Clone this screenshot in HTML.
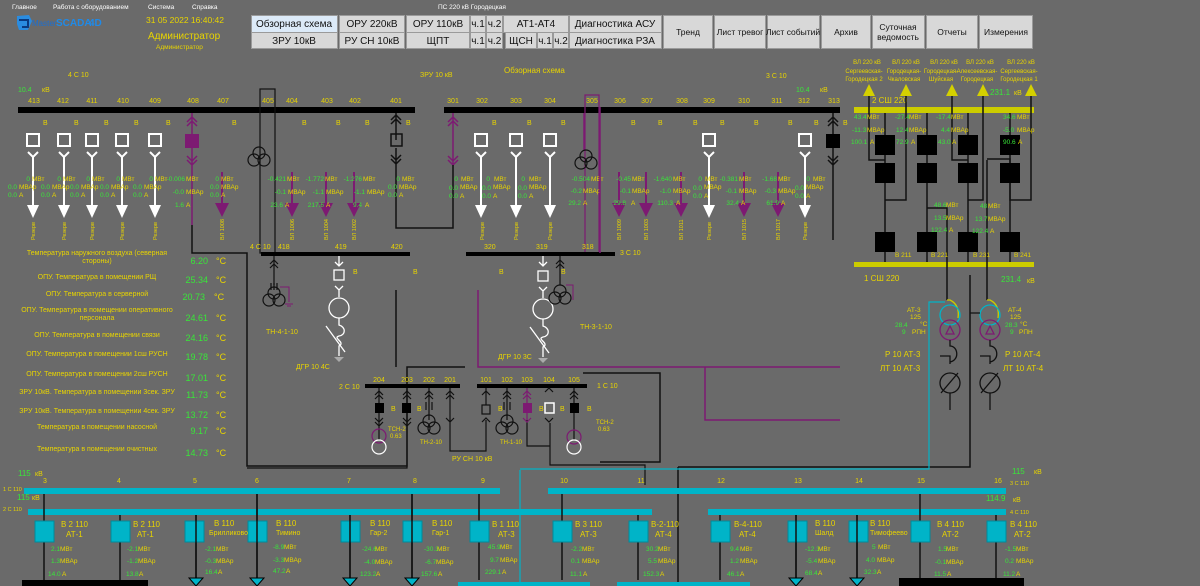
<!DOCTYPE html>
<html><head><meta charset="utf-8"><style>
html,body{margin:0;padding:0;background:#6a6a6a;width:1200px;height:586px;overflow:hidden}
svg{display:block;font-size:7px}
text{font-family:"Liberation Sans","DejaVu Sans",sans-serif}
.y{fill:#e8d400}.g{fill:#39e639}.w{fill:#fff}
.btn{fill:#d8d8d8;stroke:#9a9a9a;stroke-width:1}
.bt{font-size:10px;fill:#111;text-anchor:middle}
.bs{font-size:8.5px;fill:#111;text-anchor:middle}
</style></head><body>
<svg width="1200" height="586" viewBox="0 0 1200 586" xmlns="http://www.w3.org/2000/svg" font-size="7">
<defs>
<g id="wf" stroke="#fff" fill="none" stroke-width="2">
<rect x="-6" y="134" width="12" height="12"/>
<path d="M-5 152 L0 157 L5 152 M0 157 V205"/>
<path d="M-6 205 H6 L0 218 Z" fill="#fff" stroke="none"/>
</g>
<g id="pf" stroke="#7d1a72" fill="none" stroke-width="2">
<path d="M0 172 V205"/>
<path d="M-7 203 H7 L0 217 Z" fill="#7d1a72" stroke="none"/>
</g>
<g id="cb">
<rect x="-9" y="0" width="19" height="21" fill="#00b4c8" stroke="#008a9a"/>
</g>
<g id="ct" fill="#00b4c8" stroke="#000">
<path d="M-7 0 H7 L0 8 Z"/>
</g>
<g id="trf" fill="none" stroke="#111" stroke-width="1.2">
<circle cx="-5" cy="0" r="6"/><circle cx="5" cy="0" r="6"/><circle cx="0" cy="-7" r="6"/>
</g>
</defs>

<!-- top menu -->
<text x="12" y="9" class="w" font-size="6.5">Главное</text>
<text x="53" y="9" class="w" font-size="6.5">Работа с оборудованием</text>
<text x="148" y="9" class="w" font-size="6.5">Система</text>
<text x="192" y="9" class="w" font-size="6.5">Справка</text>
<text x="438" y="9" class="w" font-size="6.5">ПС 220 кВ Городецкая</text>
<!-- logo -->
<path d="M17 16 L29 15 L32 21 L28 30 L19 30 L17 24 Z" fill="#2a8ce0"/>
<path d="M19 20 H28 V27 H22" fill="none" stroke="#0a3a80" stroke-width="2"/>
<text x="32" y="26" fill="#1c6fd0" font-size="8">Master</text>
<text x="56" y="26" fill="#1f8ae8" font-size="10" font-weight="bold">SCADA</text>
<text x="89" y="26" fill="#1f8ae8" font-size="10" font-weight="bold">4D</text>
<text x="146" y="23" class="y" font-size="8.5">31 05 2022 16:40:42</text>
<text x="148" y="39" class="y" font-size="10">Администратор</text>
<text x="156" y="49" class="y" font-size="6.5">Администратор</text>

<!-- buttons -->
<rect x="251.5" y="15.5" width="86" height="17" fill="#dceaf8" stroke="#9a9a9a"/><text x="294" y="27" class="bt">Обзорная схема</text>
<rect x="339.5" y="15.5" width="65" height="17" class="btn"/><text x="372" y="27" class="bt">ОРУ 220кВ</text>
<rect x="406.5" y="15.5" width="63" height="17" class="btn"/><text x="438" y="27" class="bt">ОРУ 110кВ</text>
<rect x="470.5" y="15.5" width="15" height="17" class="btn"/><text x="478" y="27" class="bt">ч.1</text>
<rect x="486.5" y="15.5" width="16" height="17" class="btn"/><text x="494.5" y="27" class="bt">ч.2</text>
<rect x="503.5" y="15.5" width="65" height="17" class="btn"/><text x="536" y="27" class="bt">АТ1-АТ4</text>
<rect x="569.5" y="15.5" width="92" height="17" class="btn"/><text x="615" y="27" class="bt">Диагностика АСУ</text>
<rect x="251.5" y="32.5" width="86" height="16" class="btn"/><text x="294" y="44" class="bt">ЗРУ 10кВ</text>
<rect x="339.5" y="32.5" width="65" height="16" class="btn"/><text x="372" y="44" class="bt">РУ СН 10кВ</text>
<rect x="406.5" y="32.5" width="63" height="16" class="btn"/><text x="438" y="44" class="bt">ЩПТ</text>
<rect x="470.5" y="32.5" width="15" height="16" class="btn"/><text x="478" y="44" class="bt">ч.1</text>
<rect x="486.5" y="32.5" width="16" height="16" class="btn"/><text x="494.5" y="44" class="bt">ч.2</text>
<rect x="505.5" y="32.5" width="31" height="16" class="btn"/><text x="521" y="44" class="bt">ЩСН</text>
<rect x="537.5" y="32.5" width="15" height="16" class="btn"/><text x="545" y="44" class="bt">ч.1</text>
<rect x="553.5" y="32.5" width="15" height="16" class="btn"/><text x="561" y="44" class="bt">ч.2</text>
<rect x="569.5" y="32.5" width="92" height="16" class="btn"/><text x="615" y="44" class="bt">Диагностика РЗА</text>
<rect x="663.5" y="15.5" width="49" height="33" class="btn"/><text x="688" y="35" class="bs">Тренд</text>
<rect x="714.5" y="15.5" width="51" height="33" class="btn"/><text x="740" y="35" class="bs">Лист тревог</text>
<rect x="767.5" y="15.5" width="52" height="33" class="btn"/><text x="793" y="35" class="bs">Лист событий</text>
<rect x="821.5" y="15.5" width="49" height="33" class="btn"/><text x="846" y="35" class="bs">Архив</text>
<rect x="872.5" y="15.5" width="52" height="33" class="btn"/><text x="898" y="30" class="bs">Суточная</text><text x="898" y="40" class="bs">ведомость</text>
<rect x="926.5" y="15.5" width="51" height="33" class="btn"/><text x="952" y="35" class="bs">Отчеты</text>
<rect x="979.5" y="15.5" width="53" height="33" class="btn"/><text x="1006" y="35" class="bs">Измерения</text>

<text x="504" y="73" class="y" font-size="8">Обзорная схема</text>
<text x="68" y="77" class="y">4 С 10</text>
<text x="420" y="77" class="y">ЗРУ 10 кВ</text>
<text x="766" y="78" class="y">3 С 10</text>
<text x="18" y="92" class="g">10.4</text><text x="42" y="92" class="y">кВ</text>
<text x="796" y="92" class="g">10.4</text><text x="820" y="92" class="y">кВ</text>

<!-- top buses -->
<rect x="18" y="107" width="397" height="6" fill="#000"/>
<rect x="444" y="107" width="396" height="6" fill="#000"/>
<g class="y" text-anchor="middle">
<text x="34" y="103">413</text><text x="63" y="103">412</text><text x="92" y="103">411</text><text x="123" y="103">410</text><text x="155" y="103">409</text><text x="193" y="103">408</text><text x="223" y="103">407</text><text x="268" y="103">405</text><text x="292" y="103">404</text><text x="327" y="103">403</text><text x="355" y="103">402</text><text x="396" y="103">401</text>
<text x="453" y="103">301</text><text x="482" y="103">302</text><text x="516" y="103">303</text><text x="550" y="103">304</text><text x="592" y="103">305</text><text x="620" y="103">306</text><text x="647" y="103">307</text><text x="682" y="103">308</text><text x="709" y="103">309</text><text x="744" y="103">310</text><text x="777" y="103">311</text><text x="804" y="103">312</text><text x="834" y="103">313</text>
</g>
<g class="y">
<text x="43" y="125">В</text><text x="74" y="125">В</text><text x="104" y="125">В</text><text x="134" y="125">В</text><text x="166" y="125">В</text><text x="232" y="125">В</text><text x="302" y="125">В</text><text x="336" y="125">В</text><text x="365" y="125">В</text><text x="406" y="125">В</text>
<text x="492" y="125">В</text><text x="527" y="125">В</text><text x="561" y="125">В</text><text x="631" y="125">В</text><text x="658" y="125">В</text><text x="693" y="125">В</text><text x="720" y="125">В</text><text x="754" y="125">В</text><text x="788" y="125">В</text><text x="814" y="125">В</text><text x="843" y="125">В</text>
</g>

<use href="#wf" x="33"/><use href="#wf" x="64"/><use href="#wf" x="92"/><use href="#wf" x="122"/><use href="#wf" x="155"/>
<use href="#wf" x="481"/><use href="#wf" x="516"/><use href="#wf" x="550"/><use href="#wf" x="709"/><use href="#wf" x="805"/>
<use href="#pf" x="222"/><use href="#pf" x="292"/><use href="#pf" x="326"/><use href="#pf" x="354"/>
<use href="#pf" x="619"/><use href="#pf" x="646"/><use href="#pf" x="681"/><use href="#pf" x="744"/><use href="#pf" x="778"/>
<g stroke="#7d1a72" fill="none" stroke-width="1.5">
<path d="M192 113 V225 M187 122 L192 117 L197 122 M187 126 L192 121 L197 126 M187 156 L192 161 L197 156 M187 160 L192 165 L197 160"/>
</g>
<rect x="185" y="134" width="14" height="14" fill="#7d1a72"/>
<path d="M192 225 V253 H247 V466 H407 V367 H465" fill="none" stroke="#111" stroke-width="1.5"/>
<rect x="260" y="89" width="15" height="164" fill="none" stroke="#111" stroke-width="1.2"/>
<use href="#trf" x="259" y="160"/>
<g stroke="#111" fill="none" stroke-width="1.5">
<path d="M396 113 V140 M391 120 L396 115 L401 120 M391 124 L396 119 L401 124 M396 148 V228 H420 M391 155 L396 160 L401 155 M391 159 L396 164 L401 159"/>
<rect x="391" y="134" width="11" height="12"/>
</g>
<g stroke="#7d1a72" fill="none" stroke-width="1.5">
<path d="M453 113 V165 M448 122 L453 117 L458 122 M448 126 L453 121 L458 126 M448 156 L453 161 L458 156 M448 160 L453 165 L458 160"/>
</g>
<path d="M453 165 V228 H420" fill="none" stroke="#111" stroke-width="1.5"/>
<rect x="585" y="95" width="14" height="158" fill="none" stroke="#7d1a72" stroke-width="1.2"/>
<path d="M584 113 V150" stroke="#7d1a72" stroke-width="1.5"/>
<use href="#trf" x="586" y="163"/>
<g stroke="#111" fill="none" stroke-width="1.5">
<path d="M833 113 V240 M828 122 L833 117 L838 122 M828 126 L833 121 L838 126 M828 156 L833 161 L838 156 M828 160 L833 165 L838 160"/>
</g>
<rect x="826" y="134" width="14" height="14" fill="#000"/>

<g font-size="6.5">
<text x="30" y="181" class="g" text-anchor="end">0</text><text x="32" y="181" class="y">МВт</text><text x="8" y="189" class="g">0.0</text><text x="19" y="189" class="y">МВАр</text><text x="8" y="197" class="g">0.0</text><text x="19" y="197" class="y">А</text>
<text x="61" y="181" class="g" text-anchor="end">0</text><text x="63" y="181" class="y">МВт</text><text x="41" y="189" class="g">0.0</text><text x="52" y="189" class="y">МВАр</text><text x="41" y="197" class="g">0.0</text><text x="52" y="197" class="y">А</text>
<text x="90" y="181" class="g" text-anchor="end">0</text><text x="92" y="181" class="y">МВт</text><text x="70" y="189" class="g">0.0</text><text x="81" y="189" class="y">МВАр</text><text x="70" y="197" class="g">0.0</text><text x="81" y="197" class="y">А</text>
<text x="120" y="181" class="g" text-anchor="end">0</text><text x="122" y="181" class="y">МВт</text><text x="100" y="189" class="g">0.0</text><text x="111" y="189" class="y">МВАр</text><text x="100" y="197" class="g">0.0</text><text x="111" y="197" class="y">А</text>
<text x="153" y="181" class="g" text-anchor="end">0</text><text x="155" y="181" class="y">МВт</text><text x="133" y="189" class="g">0.0</text><text x="144" y="189" class="y">МВАр</text><text x="133" y="197" class="g">0.0</text><text x="144" y="197" class="y">А</text>
<text x="185" y="181" class="g" text-anchor="end">-0.006</text><text x="186" y="181" class="y">МВт</text><text x="184" y="194" class="g" text-anchor="end">-0.0</text><text x="186" y="194" class="y">МВАр</text><text x="184" y="207" class="g" text-anchor="end">1.6</text><text x="186" y="207" class="y">А</text>
<text x="219" y="181" class="g" text-anchor="end">0</text><text x="221" y="181" class="y">МВт</text><text x="210" y="189" class="g">0.0</text><text x="221" y="189" class="y">МВАр</text><text x="210" y="197" class="g">0.0</text><text x="221" y="197" class="y">А</text>
<text x="286" y="181" class="g" text-anchor="end">-0.421</text><text x="287" y="181" class="y">МВт</text><text x="286" y="194" class="g" text-anchor="end">-0.1</text><text x="288" y="194" class="y">МВАр</text><text x="283" y="207" class="g" text-anchor="end">23.6</text><text x="285" y="207" class="y">А</text>
<text x="324" y="181" class="g" text-anchor="end">-1.772</text><text x="325" y="181" class="y">МВт</text><text x="324" y="194" class="g" text-anchor="end">-1.1</text><text x="326" y="194" class="y">МВАр</text><text x="324" y="207" class="g" text-anchor="end">217.6</text><text x="326" y="207" class="y">А</text>
<text x="362" y="181" class="g" text-anchor="end">-1.276</text><text x="363" y="181" class="y">МВт</text><text x="365" y="194" class="g" text-anchor="end">-1.1</text><text x="367" y="194" class="y">МВАр</text><text x="362" y="207" class="g" text-anchor="end">9.4</text><text x="365" y="207" class="y">А</text>
<text x="400" y="181" class="g" text-anchor="end">0</text><text x="402" y="181" class="y">МВт</text><text x="388" y="189" class="g">0.0</text><text x="399" y="189" class="y">МВАр</text><text x="388" y="197" class="g">0.0</text><text x="399" y="197" class="y">А</text>
<text x="458" y="181" class="g" text-anchor="end">0</text><text x="461" y="181" class="y">МВт</text><text x="449" y="190" class="g">0.0</text><text x="460" y="189" class="y">МВАр</text><text x="449" y="198" class="g">0.0</text><text x="460" y="198" class="y">А</text>
<text x="490" y="181" class="g" text-anchor="end">0</text><text x="494" y="181" class="y">МВт</text><text x="482" y="190" class="g">0.0</text><text x="493" y="189" class="y">МВАр</text><text x="482" y="198" class="g">0.0</text><text x="493" y="198" class="y">А</text>
<text x="525" y="181" class="g" text-anchor="end">0</text><text x="529" y="181" class="y">МВт</text><text x="518" y="190" class="g">0.0</text><text x="529" y="189" class="y">МВАр</text><text x="518" y="198" class="g">0.0</text><text x="529" y="198" class="y">А</text>
<text x="590" y="181" class="g" text-anchor="end">-0.504</text><text x="591" y="181" class="y">МВт</text><text x="582" y="193" class="g" text-anchor="end">-0.2</text><text x="583" y="193" class="y">МВАр</text><text x="581" y="205" class="g" text-anchor="end">29.2</text><text x="583" y="205" class="y">А</text>
<text x="631" y="181" class="g" text-anchor="end">-0.45</text><text x="632" y="181" class="y">МВт</text><text x="631" y="193" class="g" text-anchor="end">-0.1</text><text x="632" y="193" class="y">МВАр</text><text x="626" y="205" class="g" text-anchor="end">29.8</text><text x="631" y="205" class="y">А</text>
<text x="672" y="181" class="g" text-anchor="end">-1.640</text><text x="673" y="181" class="y">МВт</text><text x="671" y="193" class="g" text-anchor="end">-1.0</text><text x="673" y="193" class="y">МВАр</text><text x="673" y="205" class="g" text-anchor="end">110.3</text><text x="676" y="205" class="y">А</text>
<text x="702" y="181" class="g" text-anchor="end">0</text><text x="705" y="181" class="y">МВт</text><text x="693" y="190" class="g">0.0</text><text x="704" y="189" class="y">МВАр</text><text x="693" y="198" class="g">0.0</text><text x="704" y="198" class="y">А</text>
<text x="738" y="181" class="g" text-anchor="end">-0.381</text><text x="739" y="181" class="y">МВт</text><text x="737" y="193" class="g" text-anchor="end">-0.1</text><text x="739" y="193" class="y">МВАр</text><text x="739" y="205" class="g" text-anchor="end">32.4</text><text x="741" y="205" class="y">А</text>
<text x="777" y="181" class="g" text-anchor="end">-1.68</text><text x="778" y="181" class="y">МВт</text><text x="776" y="193" class="g" text-anchor="end">-0.3</text><text x="778" y="193" class="y">МВАр</text><text x="779" y="205" class="g" text-anchor="end">61.9</text><text x="781" y="205" class="y">А</text>
<text x="810" y="181" class="g" text-anchor="end">0</text><text x="813" y="181" class="y">МВт</text><text x="795" y="190" class="g">0.0</text><text x="806" y="189" class="y">МВАр</text><text x="795" y="198" class="g">0.0</text><text x="806" y="198" class="y">А</text>
</g>
<g class="y" font-size="5.5">
<text transform="translate(35,240) rotate(-90)">Резерв</text><text transform="translate(66,240) rotate(-90)">Резерв</text><text transform="translate(94,240) rotate(-90)">Резерв</text><text transform="translate(124,240) rotate(-90)">Резерв</text><text transform="translate(157,240) rotate(-90)">Резерв</text>
<text transform="translate(224,240) rotate(-90)">ВЛ 1008</text><text transform="translate(294,240) rotate(-90)">ВЛ 1006</text><text transform="translate(328,240) rotate(-90)">ВЛ 1004</text><text transform="translate(356,240) rotate(-90)">ВЛ 1002</text>
<text transform="translate(484,240) rotate(-90)">Резерв</text><text transform="translate(518,240) rotate(-90)">Резерв</text><text transform="translate(552,240) rotate(-90)">Резерв</text>
<text transform="translate(621,240) rotate(-90)">ВЛ 1009</text><text transform="translate(648,240) rotate(-90)">ВЛ 1003</text><text transform="translate(683,240) rotate(-90)">ВЛ 1011</text><text transform="translate(711,240) rotate(-90)">Резерв</text><text transform="translate(746,240) rotate(-90)">ВЛ 1015</text><text transform="translate(780,240) rotate(-90)">ВЛ 1017</text><text transform="translate(807,240) rotate(-90)">Резерв</text>
</g>

<g class="y" font-size="7" text-anchor="middle">
<text x="97" y="255">Температура наружного воздуха (северная</text><text x="97" y="263">стороны)</text>
<text x="97" y="279">ОПУ. Температура в помещении РЩ</text>
<text x="97" y="296">ОПУ. Температура в серверной</text>
<text x="97" y="312">ОПУ. Температура в помещении оперативного</text><text x="97" y="320">персонала</text>
<text x="97" y="337">ОПУ. Температура в помещении связи</text>
<text x="97" y="356">ОПУ. Температура в помещении 1сш РУСН</text>
<text x="97" y="376">ОПУ. Температура в помещении 2сш РУСН</text>
<text x="97" y="394">ЗРУ 10кВ. Температура в помещении 3сек. ЗРУ</text>
<text x="97" y="413">ЗРУ 10кВ. Температура в помещении 4сек. ЗРУ</text>
<text x="97" y="429">Температура в помещении насосной</text>
<text x="97" y="451">Температура в помещении очистных</text>
</g>
<g font-size="9">
<text x="208" y="264" class="g" text-anchor="end">6.20</text><text x="216" y="264" class="y">°C</text>
<text x="208" y="283" class="g" text-anchor="end">25.34</text><text x="216" y="283" class="y">°C</text>
<text x="205" y="300" class="g" text-anchor="end">20.73</text><text x="214" y="300" class="y">°C</text>
<text x="208" y="321" class="g" text-anchor="end">24.61</text><text x="216" y="321" class="y">°C</text>
<text x="208" y="341" class="g" text-anchor="end">24.16</text><text x="216" y="341" class="y">°C</text>
<text x="208" y="360" class="g" text-anchor="end">19.78</text><text x="216" y="360" class="y">°C</text>
<text x="208" y="381" class="g" text-anchor="end">17.01</text><text x="216" y="381" class="y">°C</text>
<text x="208" y="398" class="g" text-anchor="end">11.73</text><text x="216" y="398" class="y">°C</text>
<text x="208" y="418" class="g" text-anchor="end">13.72</text><text x="216" y="418" class="y">°C</text>
<text x="208" y="434" class="g" text-anchor="end">9.17</text><text x="216" y="434" class="y">°C</text>
<text x="208" y="456" class="g" text-anchor="end">14.73</text><text x="216" y="456" class="y">°C</text>
</g>

<rect x="261" y="252" width="149" height="4" fill="#000"/>
<rect x="466" y="252" width="149" height="4" fill="#000"/>
<text x="250" y="249" class="y">4 С 10</text><text x="278" y="249" class="y">418</text><text x="335" y="249" class="y">419</text><text x="391" y="249" class="y">420</text>
<text x="484" y="249" class="y">320</text><text x="536" y="249" class="y">319</text><text x="582" y="249" class="y">318</text><text x="620" y="255" class="y">3 С 10</text>
<g class="y"><text x="353" y="274">В</text><text x="413" y="274">В</text><text x="499" y="274">В</text><text x="561" y="274">В</text></g>
<path d="M600 107 V253" stroke="#7d1a72" stroke-width="1.5"/>
<g stroke="#111" fill="none" stroke-width="1.2">
<path d="M274 256 V285 M270 264 L274 260 L278 264 M270 268 L274 264 L278 268"/>
<path d="M271 283 V290 M274 283 V290 M277 283 V290"/>
</g>
<use href="#trf" x="274" y="300"/>
<path d="M280 287 H289 V302 M285 304 H293 M287 306 H291" stroke="#7d1a72" fill="none"/>
<text x="266" y="334" class="y">ТН-4-1-10</text>
<g stroke="#fff" fill="none" stroke-width="1.3">
<path d="M335 262 L339 266 L343 262 M339 266 V256"/>
<rect x="334" y="270" width="10" height="10"/>
<path d="M335 286 L339 290 L343 286 M339 290 V297"/>
<circle cx="339" cy="308" r="10"/>
<path d="M339 318 V325 C346 327 346 335 339 336 C332 338 346 342 339 346 V356 M326 326 L345 352"/>
</g>
<path d="M334 357 H344 L339 362 Z" fill="#aaa"/>
<text x="296" y="369" class="y">ДГР 10 4С</text>
<g stroke="#fff" fill="none" stroke-width="1.3">
<path d="M539 262 L543 266 L547 262 M543 266 V256"/>
<rect x="538" y="271" width="10" height="10"/>
<path d="M539 287 L543 291 L547 287 M543 291 V298"/>
<circle cx="543" cy="309" r="10"/>
<path d="M543 319 V326 C550 328 550 336 543 337 C536 339 550 343 543 347 V357 M530 327 L549 353"/>
</g>
<path d="M538 358 H548 L543 363 Z" fill="#aaa"/>
<text x="498" y="359" class="y">ДГР 10 3С</text>
<g stroke="#111" fill="none" stroke-width="1.2"><path d="M560 256 V285 M556 264 L560 260 L564 264 M556 268 L560 264 L564 268"/></g>
<use href="#trf" x="560" y="298"/>
<path d="M566 285 H573 V300" stroke="#7d1a72" fill="none"/>
<text x="580" y="329" class="y">ТН-3-1-10</text>
<path d="M396 290 V367" stroke="#111" fill="none" stroke-width="1.5"/>
<path d="M478 290 V367 H840" stroke="#7d1a72" fill="none" stroke-width="1.5"/>

<rect x="365" y="384" width="95" height="4" fill="#000"/>
<rect x="477" y="384" width="110" height="4" fill="#000"/>
<text x="339" y="389" class="y">2 С 10</text><text x="597" y="388" class="y">1 С 10</text>
<g class="y" text-anchor="middle"><text x="379" y="382">204</text><text x="407" y="382">203</text><text x="429" y="382">202</text><text x="450" y="382">201</text><text x="486" y="382">101</text><text x="507" y="382">102</text><text x="527" y="382">103</text><text x="549" y="382">104</text><text x="574" y="382">105</text></g>
<g stroke="#111" fill="none" stroke-width="1.2">
<path d="M379 388 V440 M375 395 L379 391 L383 395 M375 399 L379 395 L383 399 M375 418 L379 422 L383 418 M375 422 L379 426 L383 422"/>
<path d="M407 388 V468 H247 M403 395 L407 391 L411 395 M403 399 L407 395 L411 399 M403 418 L407 422 L411 418 M403 422 L407 426 L411 422"/>
<path d="M429 388 V420 M425 395 L429 391 L433 395 M425 399 L429 395 L433 399 M426 402 V410 M429 402 V410 M432 402 V410"/>
<path d="M450 388 V451 H486 V420 M446 395 L450 391 L454 395 M446 399 L450 395 L454 399 M446 418 L450 422 L454 418"/>
<path d="M486 388 V405 M482 395 L486 391 L490 395 M482 422 L486 418 L490 422"/>
<rect x="482" y="405" width="8" height="9"/>
<path d="M507 388 V420 M503 395 L507 391 L511 395 M503 399 L507 395 L511 399 M504 402 V410 M507 402 V410 M510 402 V410"/>
<path d="M527 420 V446 H550 V423 M550 446 V465 H645 V485 M574 388 V440 M570 395 L574 391 L578 395 M570 399 L574 395 L578 399"/>
<path d="M545 392 L549 388 L553 392 M545 418 L549 422 L553 418"/>
</g>
<rect x="375" y="403" width="9" height="10" fill="#000"/>
<rect x="402" y="403" width="9" height="10" fill="#000"/>
<rect x="570" y="403" width="9" height="10" fill="#000"/>
<rect x="545" y="403" width="9" height="10" fill="none" stroke="#fff" stroke-width="1.5"/>
<rect x="523" y="403" width="9" height="10" fill="#7d1a72"/>
<g stroke="#7d1a72" fill="none" stroke-width="1.2"><path d="M527 388 V420 M523 395 L527 391 L531 395 M523 399 L527 395 L531 399 M523 418 L527 422 L531 418"/></g>
<use href="#trf" x="429" y="428"/><use href="#trf" x="507" y="428"/>
<circle cx="379" cy="436" r="7" fill="none" stroke="#7d1a72" stroke-width="1.2"/>
<circle cx="379" cy="447" r="7" fill="none" stroke="#fff" stroke-width="1.2"/>
<circle cx="574" cy="437" r="7" fill="none" stroke="#7d1a72" stroke-width="1.2"/>
<circle cx="574" cy="447" r="7" fill="none" stroke="#fff" stroke-width="1.2"/>
<g class="y" font-size="6"><text x="388" y="431">ТСН-2</text><text x="390" y="438">0.63</text><text x="596" y="424">ТСН-2</text><text x="598" y="431">0.63</text><text x="420" y="444">ТН-2-10</text><text x="500" y="444">ТН-1-10</text></g>
<g class="y"><text x="391" y="411">В</text><text x="417" y="411">В</text><text x="498" y="411">В</text><text x="539" y="411">В</text><text x="560" y="411">В</text><text x="587" y="411">В</text></g>
<text x="452" y="461" class="y">РУ СН 10 кВ</text>
<path d="M583 373 H660 V462 H645" fill="none" stroke="#111" stroke-width="1.5"/>
<path d="M645 462 H600 M678 467 V586 M678 467 H970 V275" fill="none" stroke="#111" stroke-width="1.5"/>
<path d="M520 470 V586 M520 469 H929 V302 H945" fill="none" stroke="#00b4c8" stroke-width="1.2"/>
<path d="M705 367 V420 H840" fill="none" stroke="#7d1a72" stroke-width="1.5"/>

<g class="y" font-size="6" text-anchor="middle">
<text x="867" y="64">ВЛ 220 кВ</text><text x="906" y="64">ВЛ 220 кВ</text><text x="944" y="64">ВЛ 220 кВ</text><text x="980" y="64">ВЛ 220 кВ</text><text x="1021" y="64">ВЛ 220 кВ</text>
<text x="864" y="73">Сергеевская-</text><text x="864" y="81">Городецкая 2</text>
<text x="904" y="73">Городецкая-</text><text x="904" y="81">Чкаловская</text>
<text x="941" y="73">Городецкая-</text><text x="941" y="81">Шуйская</text>
<text x="977" y="73">Алексеевская-</text><text x="977" y="81">Городецкая</text>
<text x="1019" y="73">Сергеевская-</text><text x="1019" y="81">Городецкая 1</text>
</g>
<g fill="#d4d000"><path d="M863 96 H875 L869 84 Z"/><path d="M900 96 H912 L906 84 Z"/><path d="M946 96 H958 L952 84 Z"/><path d="M977 96 H989 L983 84 Z"/><path d="M1025 96 H1037 L1031 84 Z"/></g>
<text x="990" y="95" class="g" font-size="8">231.1</text><text x="1014" y="95" class="y">кВ</text>
<text x="872" y="103" class="y" font-size="8">2 СШ 220</text>
<rect x="854" y="107" width="180" height="6" fill="#cccc00"/>
<rect x="854" y="262" width="180" height="5" fill="#cccc00"/>
<g stroke="#111" fill="none" stroke-width="1.5">
<path d="M869 96 V160 H885 M906 96 V200 H885 M952 96 V160 H968 M983 96 V200 H968 M1031 96 V200 H1010 V159 H987"/>
<path d="M885 113 V262 M927 113 V262 M968 113 V262 M1010 113 V262 M927 208 H947 V300 M987 160 V300"/>
</g>
<g fill="#000"><rect x="875" y="135" width="20" height="20"/><rect x="917" y="135" width="20" height="20"/><rect x="958" y="135" width="20" height="20"/><rect x="1000" y="135" width="20" height="20"/>
<rect x="875" y="163" width="20" height="20"/><rect x="917" y="163" width="20" height="20"/><rect x="958" y="163" width="20" height="20"/><rect x="1000" y="163" width="20" height="20"/>
<rect x="875" y="232" width="20" height="20"/><rect x="917" y="232" width="20" height="20"/><rect x="958" y="232" width="20" height="20"/><rect x="1000" y="232" width="20" height="20"/></g>
<g font-size="6.5">
<text x="854" y="119" class="g">43.4</text><text x="867" y="119" class="y">МВт</text><text x="895" y="119" class="g">-27.4</text><text x="909" y="119" class="y">МВт</text><text x="936" y="119" class="g">-17.4</text><text x="951" y="119" class="y">МВт</text><text x="1003" y="119" class="g">34.6</text><text x="1017" y="119" class="y">МВт</text>
<text x="852" y="132" class="g">-11.3</text><text x="867" y="132" class="y">МВАр</text><text x="896" y="132" class="g">12.4</text><text x="909" y="132" class="y">МВАр</text><text x="941" y="132" class="g">4.4</text><text x="951" y="132" class="y">МВАр</text><text x="1003" y="132" class="g">-5.0</text><text x="1017" y="132" class="y">МВАр</text>
<text x="851" y="144" class="g">100.1</text><text x="870" y="144" class="y">А</text><text x="896" y="144" class="g">72.9</text><text x="911" y="144" class="y">А</text><text x="938" y="144" class="g">43.0</text><text x="952" y="144" class="y">А</text><text x="1003" y="144" class="g">90.6</text><text x="1018" y="144" class="y">А</text>
<text x="934" y="207" class="g">48.6</text><text x="946" y="207" class="y">МВт</text><text x="980" y="208" class="g">48</text><text x="988" y="208" class="y">МВт</text>
<text x="934" y="220" class="g">13.5</text><text x="946" y="220" class="y">МВАр</text><text x="975" y="221" class="g">13.7</text><text x="988" y="221" class="y">МВАр</text>
<text x="931" y="232" class="g">122.4</text><text x="949" y="232" class="y">А</text><text x="972" y="233" class="g">122.4</text><text x="990" y="233" class="y">А</text>
<text x="895" y="257" class="y">В 211</text><text x="931" y="257" class="y">В 221</text><text x="973" y="257" class="y">В 231</text><text x="1014" y="257" class="y">В 241</text>
</g>
<text x="864" y="281" class="y" font-size="8">1 СШ 220</text>
<text x="1001" y="282" class="g" font-size="8">231.4</text><text x="1027" y="283" class="y">кВ</text>
<g fill="none" stroke-width="1.3">
<path d="M947 300 H950 Q960 305 958 318" stroke="#cccc00"/><path d="M987 300 H990 Q1000 305 998 318" stroke="#cccc00"/>
<circle cx="950" cy="315" r="10" stroke="#00b4c8"/><circle cx="990" cy="315" r="10" stroke="#00b4c8"/>
<circle cx="950" cy="330" r="10" stroke="#7d1a72"/><circle cx="990" cy="330" r="10" stroke="#7d1a72"/>
<path d="M946 334 H954 L950 326 Z M986 334 H994 L990 326 Z" stroke="#7d1a72"/>
<path d="M950 340 V346 C958 346 960 360 950 362 M940 356 H950 V364 M990 340 V346 C998 346 1000 360 990 362 M980 356 H990 V364" stroke="#111"/>
<circle cx="950" cy="383" r="10" stroke="#111"/><circle cx="990" cy="383" r="10" stroke="#111"/>
<path d="M941 393 L958 373 M981 393 L998 373 M950 393 V410 M990 393 V410 M980 313 H970" stroke="#111"/>
</g>
<g class="y" font-size="6.5">
<text x="907" y="312">АТ-3</text><text x="910" y="319">125</text><text x="895" y="327" class="g">28.4</text><text x="920" y="326">°C</text><text x="902" y="334" class="g">9</text><text x="912" y="334">РПН</text>
<text x="1008" y="312">АТ-4</text><text x="1010" y="319">125</text><text x="1005" y="327" class="g">28.3</text><text x="1020" y="326">°C</text><text x="1010" y="334" class="g">9</text><text x="1019" y="334">РПН</text>
</g>
<g class="y" font-size="8"><text x="885" y="357">Р 10 АТ-3</text><text x="880" y="371">ЛТ 10 АТ-3</text><text x="1005" y="357">Р 10 АТ-4</text><text x="1003" y="371">ЛТ 10 АТ-4</text></g>

<text x="18" y="476" class="g" font-size="8">115</text><text x="35" y="476" class="y">кВ</text>
<text x="17" y="500" class="g" font-size="8">115</text><text x="32" y="500" class="y">кВ</text>
<text x="3" y="491" class="y" font-size="5.5">1 С 110</text><text x="3" y="511" class="y" font-size="5.5">2 С 110</text>
<text x="1012" y="474" class="g" font-size="8">115</text><text x="1034" y="474" class="y">кВ</text>
<text x="1010" y="485" class="y" font-size="5.5">3 С 110</text>
<text x="986" y="501" class="g" font-size="8">114.9</text><text x="1013" y="502" class="y">кВ</text>
<text x="1010" y="514" class="y" font-size="5.5">4 С 110</text>
<g class="y" text-anchor="middle">
<text x="45" y="483">3</text><text x="119" y="483">4</text><text x="195" y="483">5</text><text x="257" y="483">6</text><text x="349" y="483">7</text><text x="415" y="483">8</text><text x="483" y="483">9</text><text x="564" y="483">10</text><text x="641" y="483">11</text><text x="721" y="483">12</text><text x="798" y="483">13</text><text x="859" y="483">14</text><text x="921" y="483">15</text><text x="998" y="483">16</text>
</g>
<rect x="24" y="488" width="476" height="6" fill="#00b4c8"/>
<rect x="548" y="488" width="458" height="6" fill="#00b4c8"/>
<rect x="28" y="509" width="624" height="6" fill="#00b4c8"/>
<rect x="708" y="509" width="298" height="6" fill="#00b4c8"/>
<g stroke="#111" stroke-width="1.5">
<path d="M44 494 V582 M120 515 V582 M196 515 V580 M257 494 V580 M350 515 V580 M412 494 V580 M479 494 V580 M562 494 V580 M638 515 V580 M720 515 V580 M796 515 V580 M857 515 V580 M920 494 V580 M996 515 V580"/>
</g>
<g>
<use href="#cb" x="44" y="521"/><use href="#cb" x="120" y="521"/><use href="#cb" x="194" y="521"/><use href="#cb" x="257" y="521"/><use href="#cb" x="350" y="521"/><use href="#cb" x="412" y="521"/><use href="#cb" x="479" y="521"/><use href="#cb" x="562" y="521"/><use href="#cb" x="638" y="521"/><use href="#cb" x="720" y="521"/><use href="#cb" x="797" y="521"/><use href="#cb" x="858" y="521"/><use href="#cb" x="920" y="521"/><use href="#cb" x="996" y="521"/>
</g>
<path d="M196 515 V580 M257 494 V580 M350 515 V580 M412 494 V580 M796 515 V580 M857 515 V580" stroke="#111" stroke-width="1.5"/>
<use href="#ct" x="196" y="578"/><use href="#ct" x="257" y="578"/><use href="#ct" x="350" y="578"/><use href="#ct" x="412" y="578"/><use href="#ct" x="796" y="578"/><use href="#ct" x="857" y="578"/>
<g class="y" font-size="8">
<text x="61" y="527">В 2 110</text><text x="66" y="537">АТ-1</text>
<text x="133" y="527">В 2 110</text><text x="137" y="537">АТ-1</text>
<text x="214" y="526">В 110</text><text x="209" y="535" font-size="7">Брилликово</text>
<text x="276" y="526">В 110</text><text x="276" y="535" font-size="7">Тимино</text>
<text x="370" y="526">В 110</text><text x="370" y="535" font-size="7">Гар-2</text>
<text x="432" y="526">В 110</text><text x="432" y="535" font-size="7">Гар-1</text>
<text x="492" y="527">В 1 110</text><text x="498" y="537">АТ-3</text>
<text x="575" y="527">В 3 110</text><text x="580" y="537">АТ-3</text>
<text x="651" y="527">В-2-110</text><text x="655" y="537">АТ-4</text>
<text x="734" y="527">В-4-110</text><text x="739" y="537">АТ-4</text>
<text x="815" y="526">В 110</text><text x="815" y="535" font-size="7">Шалд</text>
<text x="870" y="526">В 110</text><text x="870" y="535" font-size="7">Тимофеево</text>
<text x="937" y="527">В 4 110</text><text x="942" y="537">АТ-2</text>
<text x="1010" y="527">В 4 110</text><text x="1014" y="537">АТ-2</text>
</g>
<g font-size="6.5">
<text x="51" y="551" class="g">2.1</text><text x="60" y="551" class="y">МВт</text><text x="51" y="563" class="g">1.3</text><text x="60" y="563" class="y">МВАр</text><text x="48" y="576" class="g">14.0</text><text x="62" y="576" class="y">А</text>
<text x="127" y="551" class="g">-2.1</text><text x="138" y="551" class="y">МВт</text><text x="127" y="563" class="g">-1.2</text><text x="138" y="563" class="y">МВАр</text><text x="126" y="576" class="g">13.8</text><text x="139" y="576" class="y">А</text>
<text x="205" y="551" class="g">-2.1</text><text x="216" y="551" class="y">МВт</text><text x="205" y="563" class="g">-0.3</text><text x="216" y="563" class="y">МВАр</text><text x="205" y="574" class="g">16.4</text><text x="218" y="574" class="y">А</text>
<text x="273" y="549" class="g">-8.9</text><text x="284" y="549" class="y">МВт</text><text x="273" y="562" class="g">-3.3</text><text x="284" y="562" class="y">МВАр</text><text x="273" y="573" class="g">47.2</text><text x="286" y="573" class="y">А</text>
<text x="362" y="551" class="g">-24.6</text><text x="375" y="551" class="y">МВт</text><text x="364" y="564" class="g">-4.0</text><text x="375" y="564" class="y">МВАр</text><text x="360" y="576" class="g">123.2</text><text x="376" y="576" class="y">А</text>
<text x="424" y="551" class="g">-30.3</text><text x="437" y="551" class="y">МВт</text><text x="425" y="564" class="g">-6.7</text><text x="436" y="564" class="y">МВАр</text><text x="421" y="576" class="g">157.6</text><text x="438" y="576" class="y">А</text>
<text x="488" y="549" class="g">45.9</text><text x="500" y="549" class="y">МВт</text><text x="490" y="562" class="g">9.7</text><text x="500" y="562" class="y">МВАр</text><text x="485" y="574" class="g">229.1</text><text x="502" y="574" class="y">А</text>
<text x="571" y="551" class="g">-2.2</text><text x="582" y="551" class="y">МВт</text><text x="571" y="563" class="g">0.1</text><text x="582" y="563" class="y">МВАр</text><text x="570" y="576" class="g">11.1</text><text x="583" y="576" class="y">А</text>
<text x="646" y="551" class="g">30.2</text><text x="658" y="551" class="y">МВт</text><text x="648" y="563" class="g">5.5</text><text x="658" y="563" class="y">МВАр</text><text x="643" y="576" class="g">152.3</text><text x="660" y="576" class="y">А</text>
<text x="730" y="551" class="g">9.4</text><text x="740" y="551" class="y">МВт</text><text x="730" y="563" class="g">1.2</text><text x="740" y="563" class="y">МВАр</text><text x="727" y="576" class="g">46.1</text><text x="740" y="576" class="y">А</text>
<text x="805" y="551" class="g">-12.3</text><text x="818" y="551" class="y">МВт</text><text x="806" y="563" class="g">-5.4</text><text x="818" y="563" class="y">МВАр</text><text x="805" y="575" class="g">68.4</text><text x="818" y="575" class="y">А</text>
<text x="872" y="549" class="g">5</text><text x="878" y="549" class="y">МВт</text><text x="866" y="562" class="g">4.0</text><text x="877" y="562" class="y">МВАр</text><text x="864" y="574" class="g">32.3</text><text x="877" y="574" class="y">А</text>
<text x="938" y="551" class="g">1.5</text><text x="946" y="551" class="y">МВт</text><text x="935" y="564" class="g">-0.1</text><text x="946" y="564" class="y">МВАр</text><text x="934" y="576" class="g">11.5</text><text x="947" y="576" class="y">А</text>
<text x="1005" y="551" class="g">-1.5</text><text x="1016" y="551" class="y">МВт</text><text x="1005" y="563" class="g">0.2</text><text x="1016" y="563" class="y">МВАр</text><text x="1003" y="576" class="g">11.2</text><text x="1016" y="576" class="y">А</text>
</g>
<rect x="22" y="580" width="126" height="6" fill="#000"/>
<rect x="458" y="582" width="132" height="4" fill="#00b4c8"/>
<rect x="617" y="582" width="133" height="4" fill="#00b4c8"/>
<rect x="899" y="578" width="125" height="8" fill="#000"/>
</svg>
</body></html>
